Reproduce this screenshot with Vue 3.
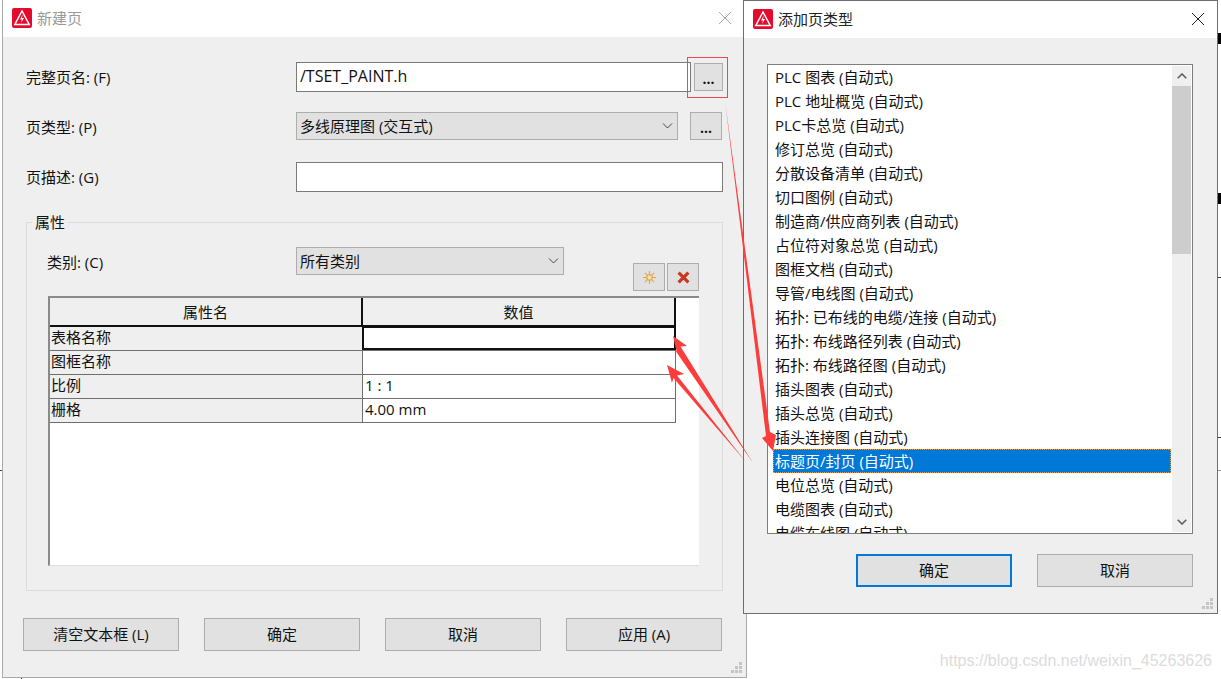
<script setup>
const rows = [
  { name: '表格名称', value: '', active: true },
  { name: '图框名称', value: '' },
  { name: '比例', value: '1 : 1' },
  { name: '栅格', value: '4.00 mm' },
]
const items = [
  'PLC 图表 (自动式)', 'PLC 地址概览 (自动式)', 'PLC卡总览 (自动式)', '修订总览 (自动式)',
  '分散设备清单 (自动式)', '切口图例 (自动式)', '制造商/供应商列表 (自动式)', '占位符对象总览 (自动式)',
  '图框文档 (自动式)', '导管/电线图 (自动式)', '拓扑: 已布线的电缆/连接 (自动式)', '拓扑: 布线路径列表 (自动式)',
  '拓扑: 布线路径图 (自动式)', '插头图表 (自动式)', '插头总览 (自动式)', '插头连接图 (自动式)',
  '标题页/封页 (自动式)', '电位总览 (自动式)', '电缆图表 (自动式)', '电缆布线图 (自动式)',
]
</script>

<template>
  <div class="desk">
    <i class="mark m1"></i><i class="mark m2"></i>
    <i class="line l1"></i><i class="line l2"></i><i class="line l3"></i><i class="line l4"></i><i class="tick"></i>

    <section class="win left">
      <header class="title dim">
        <svg class="logo" viewBox="0 0 20 20"><rect width="20" height="20" rx="2" fill="#e30a2c"/><path d="M10 3 2.800 16.500h14.400Z" fill="none" stroke="#fff" stroke-width="1.500"/><path d="M10.800 6.600 8 11.600h2l-1 3.400 3-5h-2Z" fill="#fff"/></svg>
        <span>新建页</span>
        <svg class="close" viewBox="0 0 14 14"><path d="M1 1 13 13M13 1 1 13" stroke="#a8a8a8" fill="none"/></svg>
      </header>
      <div class="body lbody">
        <div class="form">
          <div class="frow r1">
            <label>完整页名: (F)</label>
            <div class="input name">/TSET_PAINT.h</div>
            <button class="dots d1">...</button>
          </div>
          <div class="frow r2">
            <label>页类型: (P)</label>
            <div class="combo c1">多线原理图 (交互式)
              <svg viewBox="0 0 10 6"><path d="M.5.5 5 5 9.500.5" fill="none" stroke="#444"/></svg>
            </div>
            <button class="dots d2">...</button>
          </div>
          <div class="frow r3">
            <label>页描述: (G)</label>
            <div class="input desc"></div>
          </div>
        </div>

        <fieldset class="group">
          <legend>属性</legend>
          <div class="catrow">
            <label>类别: (C)</label>
            <div class="combo c2">所有类别
              <svg viewBox="0 0 10 6"><path d="M.5.5 5 5 9.500.5" fill="none" stroke="#444"/></svg>
            </div>
            <div class="tools">
              <button class="tool">
                <svg viewBox="0 0 12 12"><g stroke="#e8a33c" stroke-width="1" fill="none"><path d="M6 0v12M0 6h12M1.800 1.800l8.400 8.400M10.200 1.800l-8.400 8.400"/></g><circle cx="6" cy="6" r="2.500" fill="#efe0c4" stroke="#e8a33c"/></svg>
              </button>
              <button class="tool">
                <svg viewBox="0 0 12 12"><path d="M1.500 1.500 10.500 10.500M10.500 1.500 1.500 10.500" stroke="#c9381f" stroke-width="3" fill="none"/></svg>
              </button>
            </div>
          </div>
          <div class="grid">
            <div class="ghead">
              <div class="gh g1">属性名</div>
              <div class="gh g2">数值</div>
            </div>
            <div v-for="r in rows" :key="r.name" class="grow">
              <div class="gc g1">{{ r.name }}</div>
              <div class="gc g2" :class="{ active: r.active }">{{ r.value }}</div>
            </div>
          </div>
        </fieldset>

        <div class="actions">
          <button class="btn">清空文本框 (L)</button>
          <button class="btn">确定</button>
          <button class="btn">取消</button>
          <button class="btn">应用 (A)</button>
        </div>
        <div class="grip"><i v-for="n in 6" :key="n" :class="'p' + n"></i></div>
      </div>
    </section>

    <section class="win right">
      <header class="title">
        <svg class="logo" viewBox="0 0 20 20"><rect width="20" height="20" rx="2" fill="#e30a2c"/><path d="M10 3 2.800 16.500h14.400Z" fill="none" stroke="#fff" stroke-width="1.500"/><path d="M10.800 6.600 8 11.600h2l-1 3.400 3-5h-2Z" fill="#fff"/></svg>
        <span>添加页类型</span>
        <svg class="close" viewBox="0 0 14 14"><path d="M1 1 13 13M13 1 1 13" stroke="#222" fill="none"/></svg>
      </header>
      <div class="body rbody">
        <div class="list">
          <div class="items">
            <div v-for="it in items" :key="it" class="item" :class="{ sel: it.startsWith('标题页') }">{{ it }}</div>
          </div>
          <div class="scroll">
            <svg class="arrow" viewBox="0 0 10 6"><path d="M.7 5.300 5 1l4.300 4.300" fill="none" stroke="#606060" stroke-width="1.600"/></svg>
            <div class="thumb"></div>
            <div class="spacer"></div>
            <svg class="arrow" viewBox="0 0 10 6"><path d="M.7.7 5 5l4.300-4.300" fill="none" stroke="#606060" stroke-width="1.600"/></svg>
          </div>
        </div>
        <div class="ractions">
          <button class="btn primary">确定</button>
          <button class="btn">取消</button>
        </div>
        <div class="grip"><i v-for="n in 6" :key="n" :class="'p' + n"></i></div>
      </div>
    </section>

    <div class="redbox"></div>
    <svg class="overlay" viewBox="0 0 1221 679">
      <g fill="#fd3c3c">
        <path d="M673 336 687 346 680.500 346.500 753 463 676 351.500 676.500 351Z"/>
        <path d="M667 365 684 374 677 375.500 746 462 673.500 378 672 383Z"/>
        <path d="M725 101 770 432 776 435 773 451 762 438 766 436Z"/>
      </g>
    </svg>
    <div class="mark-text">https://blog.csdn.net/weixin_45263626</div>
  </div>
</template>

<style>
html, body { margin: 0; background: #fff; }
</style>

<style scoped>
.desk {
  position: relative;
  width: 1221px;
  height: 679px;
  overflow: hidden;
  background: #fff;
  font-family: "Open Sans", "Noto Sans CJK SC", sans-serif;
  font-size: 15px;
  color: #111;
}
.mark { position: absolute; left: 1218px; width: 3px; height: 11px; background: #000; }
.m1 { top: 33px; }
.m2 { top: 193px; }
.line { position: absolute; left: 1218px; width: 3px; height: 1px; background: #444; }
.l1 { top: 277px; }
.l2 { top: 437px; }
.l3 { top: 470px; left: 0; width: 3px; }
.l4 { top: 470px; background: #999; }
.tick { position: absolute; left: 21px; top: 677px; width: 1px; height: 2px; background: #222; }

.win { position: absolute; display: flex; flex-direction: column; box-sizing: border-box; background: #efefef; }
.left { left: 2px; top: 0; width: 745px; height: 678px; border: 1px solid #a9a9a9; border-top: 0; }
.right { left: 743px; top: 0; width: 475px; height: 614px; border: 1px solid #6e6e6e; }

.title { height: 37px; flex: none; display: flex; align-items: center; background: #fff; padding-left: 9px; padding-bottom: 2px; box-sizing: border-box; color: #222; }
.title.dim { color: #9a9a9a; }
.logo { width: 20px; height: 20px; margin-right: 5px; flex: none; }
.close { width: 14px; height: 14px; margin-left: auto; margin-right: 12px; }
.left .close { margin-right: 14px; }

.body { position: relative; flex: 1; }
.lbody { padding-left: 23px; }
.form { display: flex; flex-direction: column; }
.frow { display: flex; align-items: center; position: relative; }
.frow label { width: 270px; flex: none; margin-bottom: 1px; }
.r2 label { margin-bottom: 0; }
.r1 { margin-top: 25px; height: 30px; }
.r2 { margin-top: 20px; height: 28px; }
.r3 { margin-top: 22px; height: 30px; }

.input { box-sizing: border-box; height: 30px; background: #fff; border: 1px solid #7a7a7a; padding-left: 3px; line-height: 26px; font-size: 16px; }
.name { width: 395px; }
.desc { width: 427px; }
.combo { position: relative; box-sizing: border-box; height: 28px; background: #e1e1e1; border: 1px solid #adadad; padding-left: 3px; line-height: 26px; }
.combo svg { position: absolute; right: 4px; top: 10px; width: 11px; height: 6px; }
.c1 { width: 382px; }
.c2 { width: 268px; }
button { font: inherit; color: inherit; margin: 0; padding: 0; background: #e1e1e1; border: 1px solid #adadad; box-sizing: border-box; }
.dots { width: 29px; height: 28px; font-weight: 700; font-size: 14px; line-height: 20px; padding-top: 4px; }
.d1 { margin-left: 3px; }
.d2 { margin-left: 12px; width: 32px; }

.group { margin: 21px 0 0 0; padding: 0; width: 697px; height: 378px; box-sizing: border-box; border: 1px solid #dcdcdc; position: relative; }
.group legend { margin-left: 5px; padding: 0 3px; line-height: 18px; }
.catrow { display: flex; align-items: flex-start; height: 50px; padding-top: 15px; box-sizing: border-box; margin-top: 1px; }
.catrow label { width: 249px; margin-left: 20px; flex: none; line-height: 30px; }
.tools { display: flex; gap: 2px; margin: 16px 0 0 69px; }
.tool { width: 32px; height: 28px; display: flex; align-items: center; justify-content: center; }
.tool svg { width: 13px; height: 13px; }

.grid { margin: 14px 0 0 21px; width: 651px; height: 270px; box-sizing: border-box; background: #fff; border: 2px solid #8a8a8a; border-right: 0; border-bottom: 1px solid #dedede; }
.ghead { display: flex; height: 29px; box-sizing: border-box; background: #efefef; border-bottom: 2px solid #111; width: 626px; border-right: 2px solid #111; }
.gh { display: flex; align-items: center; justify-content: center; height: 100%; }
.ghead .g1 { width: 313px; border-right: 2px solid #111; box-sizing: border-box; }
.ghead .g2 { flex: 1; }
.grow { display: flex; height: 24px; box-sizing: border-box; border-bottom: 1px solid #6f6f6f; width: 626px; border-right: 1px solid #6f6f6f; }
.gc { line-height: 20px; box-sizing: border-box; }
.grow .g1 { width: 313px; background: #efefef; border-right: 1px solid #6f6f6f; padding-left: 1px; }
.grow .g2 { flex: 1; padding-left: 2px; background: #fff; }
.g2.active { border: 2px solid #111; margin: -1px -1px -1px -1px; height: 24px; }

.actions { display: flex; justify-content: space-between; width: 699px; margin: 27px 0 0 -3px; }
.btn { width: 156px; height: 33px; padding-bottom: 2px; }

.grip { position: absolute; right: 4px; bottom: 4px; width: 11px; height: 11px; }
.grip i { position: absolute; width: 3px; height: 3px; background: #c4c4c4; }
.p1 { right: 0; top: 0; }
.p2 { right: 0; top: 4px; }
.p3 { right: 4px; top: 4px; }
.p4 { right: 0; top: 8px; }
.p5 { right: 4px; top: 8px; }
.p6 { right: 8px; top: 8px; }

.rbody { padding: 26px 24px 0 23px; }
.list { display: flex; box-sizing: border-box; height: 470px; width: 426px; background: #fff; border: 1px solid #7d7d7d; overflow: hidden; }
.items { flex: 1; overflow: hidden; padding: 0 0 0 5px; }
.item { height: 24px; line-height: 24px; padding-left: 2px; }
.item.sel { background: #0078d7; color: #fff; outline: 1px dotted #e89a3c; outline-offset: -1px; }
.scroll { width: 19px; margin: 1px; background: #efefef; display: flex; flex-direction: column; align-items: center; flex: none; }
.arrow { width: 10px; height: 6px; flex: none; margin: 7px 0 7px; }
.thumb { width: 100%; height: 168px; flex: none; background: #cdcdcd; }
.spacer { flex: 1; }
.ractions { display: flex; justify-content: space-between; width: 337px; margin: 20px 0 0 89px; }
.primary { border: 2px solid #0078d7; }

.redbox { position: absolute; left: 687px; top: 57px; width: 41px; height: 41px; box-sizing: border-box; border: 1px solid #f0474d; }
.overlay { position: absolute; left: 0; top: 0; width: 1221px; height: 679px; pointer-events: none; }
.mark-text { position: absolute; right: 9px; top: 651px; font-family: "Liberation Sans", sans-serif; font-size: 16px; color: #dcdcdc; line-height: 20px; }
</style>
